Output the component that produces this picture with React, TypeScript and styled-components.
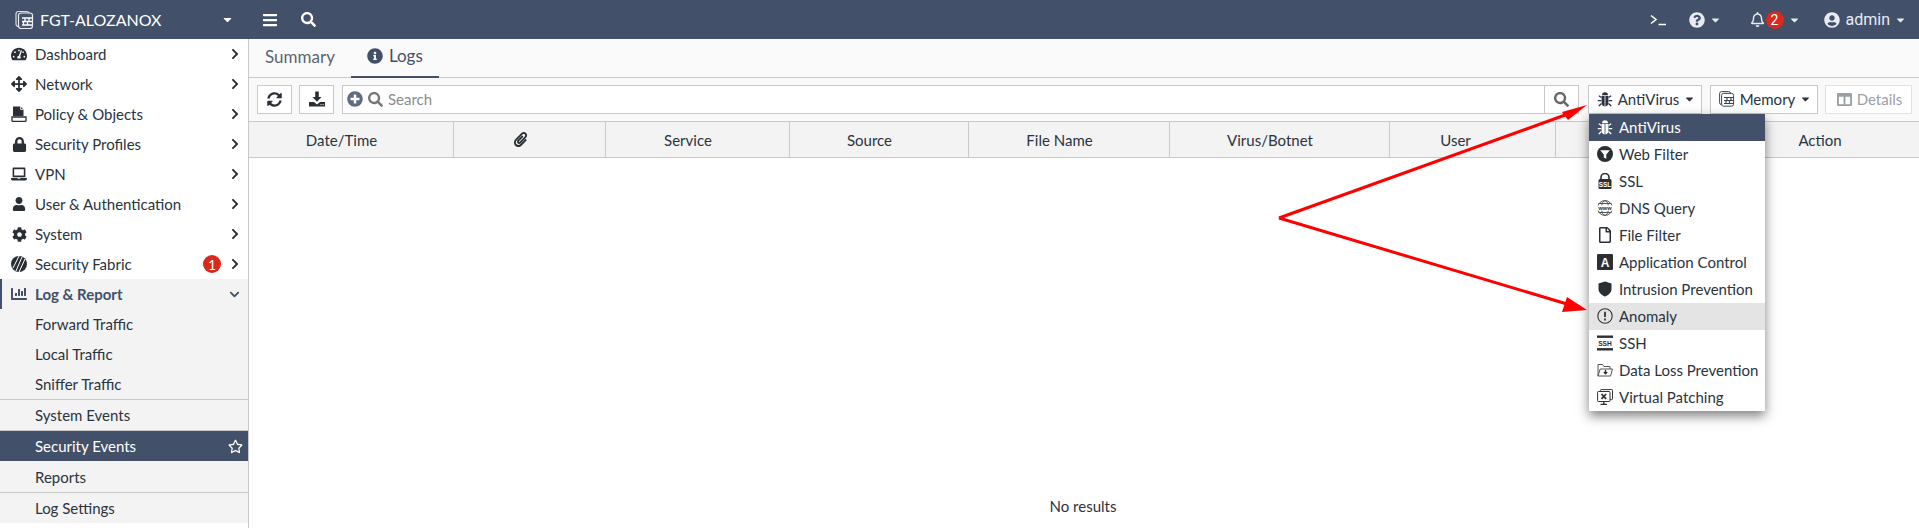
import React from "react"
import styled, { createGlobalStyle } from "styled-components"
import {
  FaTachometerAlt, FaArrowsAlt, FaLock, FaLaptop, FaUser, FaCog, FaChartBar, FaChevronRight,
  FaChevronDown, FaRegStar, FaSyncAlt, FaSearch, FaPlusCircle, FaInfoCircle, FaPaperclip,
  FaBars, FaQuestionCircle, FaRegBell, FaUserCircle, FaCaretDown, FaRegFile, FaColumns,
} from "react-icons/fa"

const navy = "#425069"
const line = "#c9c9c9"
const ink = "#2a3340"

const GlobalStyle = createGlobalStyle`
  html, body { margin: 0; padding: 0; background: #fff; }
  body { font-family: Lato, "Open Sans", sans-serif; font-size: 15px; color: ${ink}; overflow: hidden; }
  * { box-sizing: border-box; }
`

/* hand drawn icons, the ones no package has */
const LogoIcon = () => (
  <svg width="20" height="20" viewBox="0 0 20 20" fill="none" stroke="#fff">
    <rect x="1" y="1.5" width="13" height="15" rx="2.5" strokeWidth="1.2" opacity="0.8" />
    <rect x="3.5" y="3" width="14" height="15.5" rx="2.5" fill={navy} strokeWidth="1.2" opacity="0.9" />
    <path d="M7 8h11M7 11.5h10M7 15h10M10 8v3.5M14 8v3.5M8.5 11.5v3.5M12.5 11.5v3.5" strokeWidth="1.3" />
  </svg>
)
const BugIcon = () => (
  <svg width="16" height="16" viewBox="0 0 16 16" fill="currentColor">
    <path d="M5 4.2a3 3 0 0 1 6 0z" />
    <path d="M4.6 5h3v10.500C5.600 15.200 4.600 13.500 4.600 11.500z" />
    <path d="M8.400 5h3v6.500c0 2-1 3.700-3 4z" />
    <path d="M4.500 6.500 1.800 4.800M4.300 9.700H0.800M4.500 12.500 1.800 15M11.500 6.500l2.700-1.700M11.700 9.700h3.500M11.500 12.500l2.700 2.500" stroke="currentColor" strokeWidth="1.300" fill="none" />
  </svg>
)
const PolicyIcon = () => (
  <svg width="16" height="16" viewBox="0 0 16 16" fill="#2a2f36">
    <path d="M2 0.5h7.5l3 3V10H2z" />
    <path d="M1 11h14v3.5a1 1 0 0 1-1 1H2a1 1 0 0 1-1-1z" fill="#fff" stroke="#2a2f36" strokeWidth="1.3" />
    <path d="M9.5 0.5v3h3" stroke="#fff" strokeWidth="0.8" fill="none" />
  </svg>
)
const FabricIcon = () => (
  <svg width="16" height="16" viewBox="0 0 16 16">
    <circle cx="8" cy="8" r="8" fill="#2a2f36" />
    <path d="M5 15 11 1M8 16l6-13M2 12 8 0" stroke="#fff" strokeWidth="1" />
  </svg>
)
const SaveIcon = () => (
  <svg width="16" height="16" viewBox="0 0 16 16" fill="#2a2f36">
    <path d="M6.2 0.5h3.6V6h2.7L8 10.8 3.5 6h2.7z" />
    <path d="M0 11h5l3 2.4L11 11h5v4.5H0z" />
    <path d="M11.5 13.6h1M13.6 13.6h1" stroke="#fff" strokeWidth="1" />
  </svg>
)
const TerminalIcon = () => (
  <svg width="17" height="12" viewBox="0 0 17 12" fill="none" stroke="#fff" strokeWidth="1.6">
    <path d="M1 1.5 6 5.5 1 9.5M8.5 10.5H16" />
  </svg>
)
const MemoryIcon = () => (
  <svg width="16" height="16" viewBox="0 0 16 16" fill="none" stroke="#3d4654">
    <rect x="0.6" y="0.6" width="11" height="13" rx="2" strokeWidth="1" />
    <rect x="2.6" y="2.4" width="12" height="12.8" rx="2" fill="#fff" strokeWidth="1" />
    <path d="M5 6.5h10M5 9.5h10M5 12.5h10M8 6.5v3M12 6.5v3M7 9.5v3M10.5 9.5v3" strokeWidth="1.2" />
  </svg>
)
const WebFilterIcon = () => (
  <svg width="16" height="16" viewBox="0 0 16 16">
    <circle cx="8" cy="8" r="8" fill="#2a2f36" />
    <path d="M3.2 4.2h9.6L9.3 8.6v4.2L6.8 11.4V8.6z" fill="#fff" />
  </svg>
)
const SslIcon = () => (
  <svg width="16" height="16" viewBox="0 0 16 16">
    <path d="M4 7V4.5a4 4 0 0 1 8 0V7" fill="none" stroke="#2a2f36" strokeWidth="1.6" />
    <rect x="1.5" y="6" width="13" height="10" rx="1.5" fill="#2a2f36" />
    <text x="8" y="13.6" textAnchor="middle" fontSize="6.4" fontWeight="700" fill="#fff" fontFamily="Liberation Sans, sans-serif">SSL</text>
  </svg>
)
const DnsIcon = () => (
  <svg width="16" height="16" viewBox="0 0 16 16">
    <circle cx="8" cy="8" r="7.4" fill="none" stroke="#555" strokeWidth="1" />
    <ellipse cx="8" cy="8" rx="3.5" ry="7.4" fill="none" stroke="#555" strokeWidth="1" />
    <path d="M1.5 3.5h13M1.5 12.5h13" stroke="#555" strokeWidth="1" />
    <rect x="0" y="5.4" width="16" height="5.2" fill="#fff" />
    <text x="8" y="10.2" textAnchor="middle" fontSize="5.6" fontWeight="700" fill="#2a2f36" fontFamily="Liberation Sans, sans-serif">www</text>
  </svg>
)
const AppIcon = () => (
  <svg width="16" height="16" viewBox="0 0 16 16">
    <rect width="16" height="16" rx="1" fill="#2a2f36" />
    <text x="8" y="13" textAnchor="middle" fontSize="12" fontWeight="700" fill="#fff" fontFamily="Liberation Sans, sans-serif">A</text>
  </svg>
)
const ShieldIcon = () => (
  <svg width="16" height="16" viewBox="0 0 16 16">
    <path d="M8 0.5 14.5 2.6V8c0 3.6-3 6.2-6.5 7.6C4.5 14.2 1.5 11.6 1.5 8V2.6z" fill="#2a2f36" />
  </svg>
)
const AnomalyIcon = () => (
  <svg width="16" height="16" viewBox="0 0 16 16" fill="none" stroke="#333">
    <circle cx="8" cy="8" r="7.2" strokeWidth="1.1" />
    <path d="M8 3.8v5.2" strokeWidth="1.8" />
    <path d="M8 10.6v1.8" strokeWidth="1.8" />
  </svg>
)
const SshIcon = () => (
  <svg width="16" height="16" viewBox="0 0 16 16">
    <rect y="0.5" width="16" height="2.4" fill="#2a2f36" />
    <rect y="13.1" width="16" height="2.4" fill="#2a2f36" />
    <text x="8" y="10.8" textAnchor="middle" fontSize="6.6" fontWeight="700" fill="#2a2f36" fontFamily="Liberation Sans, sans-serif">SSH</text>
  </svg>
)
const DlpIcon = () => (
  <svg width="16" height="16" viewBox="0 0 16 16" fill="none" stroke="#555" strokeWidth="1">
    <path d="M1 14V2.5h4.5l1.5 2h6V7" />
    <path d="M1 14h12.6L15.5 7H3.2z" />
    <path d="M8.5 8v3.5M6.8 10l1.7 1.8 1.7-1.8" stroke="#2a2f36" strokeWidth="1.2" />
  </svg>
)
const PatchIcon = () => (
  <svg width="16" height="16" viewBox="0 0 16 16" fill="none" stroke="#333" strokeWidth="1">
    <rect x="3.5" y="0.6" width="12" height="10" rx="0.8" />
    <rect x="0.6" y="2.5" width="12.4" height="10" rx="0.8" fill="#fff" />
    <path d="M3.5 15.4h6.5M6.8 12.5v3" strokeWidth="1.4" />
    <path d="M4.5 5l4.6 4.8M9.1 5 4.5 9.8" strokeWidth="1.8" />
  </svg>
)

const Page = styled.div`
  width: 1919px;
  height: 528px;
  position: relative;
  overflow: hidden;
  display: flex;
  flex-direction: column;
`
const TopBar = styled.header`
  height: 39px;
  flex: none;
  background: ${navy};
  color: #fff;
  display: flex;
  align-items: center;
`
const Brand = styled.div`
  width: 248px;
  display: flex;
  align-items: center;
  padding-left: 15px;
  gap: 5px;
  font-size: 16px;
`
const BrandCaret = styled.span`
  margin-left: auto;
  margin-right: 14px;
  display: flex;
`
const TopLeftTools = styled.div`
  display: flex;
  align-items: center;
  gap: 23px;
  padding-left: 14px;
  svg { display: block; }
`
const TopRight = styled.div`
  margin-left: auto;
  margin-right: 13px;
  display: flex;
  align-items: center;
  font-family: Roboto, sans-serif;
  font-size: 16px;
`
const TopItem = styled.div<{ $gap: number }>`
  display: flex;
  align-items: center;
  gap: 5px;
  margin-left: ${(p) => p.$gap}px;
  color: #e8ecf2;
`
const UserName = styled.span`
  margin-left: 1px;
`
const SmallCaret = styled(FaCaretDown)`
  width: 11px;
  height: 12px;
`
const Body = styled.div`
  flex: 1;
  display: flex;
  min-height: 0;
`
const Sidebar = styled.nav`
  width: 249px;
  flex: none;
  border-right: 1px solid ${line};
  background: #fff;
`
const NavRow = styled.div<{ $section?: boolean }>`
  height: 30px;
  display: flex;
  align-items: center;
  padding-left: 11px;
  color: ${(p) => (p.$section ? navy : ink)};
  font-weight: ${(p) => (p.$section ? 700 : 400)};
  background: ${(p) => (p.$section ? "#f3f3f3" : "transparent")};
  box-shadow: ${(p) => (p.$section ? `inset 2px 0 0 ${navy}` : "none")};
`
const NavIcon = styled.span`
  width: 16px;
  margin-right: 8px;
  display: flex;
  justify-content: center;
  color: #2a2f36;
`
const NavEnd = styled.span`
  margin-left: auto;
  display: flex;
  align-items: center;
  padding-right: 8px;
  gap: 9px;
`
const Badge = styled.span`
  width: 18px;
  height: 18px;
  border-radius: 50%;
  background: #d9291c;
  color: #fff;
  font-size: 14px;
  display: flex;
  align-items: center;
  justify-content: center;
  font-weight: 400;
`
const BellBadge = styled(Badge)`
  margin-left: -4px;
`
const Chevron = styled(FaChevronRight)`
  width: 10px;
  height: 12px;
  color: #2a2f36;
`
const SubList = styled.div`
  background: #f3f3f3;
`
const SubRow = styled.div<{ $active?: boolean; $line?: boolean; $h?: number }>`
  height: ${(p) => p.$h ?? 30}px;
  display: flex;
  align-items: center;
  padding-left: 35px;
  padding-right: 5px;
  justify-content: space-between;
  background: ${(p) => (p.$active ? navy : "transparent")};
  color: ${(p) => (p.$active ? "#fff" : ink)};
  border-top: ${(p) => (p.$line ? `1px solid ${line}` : "none")};
`
const Main = styled.main`
  flex: 1;
  min-width: 0;
  display: flex;
  flex-direction: column;
`
const Tabs = styled.div`
  height: 39px;
  flex: none;
  background: #fafafa;
  border-bottom: 1px solid ${line};
  display: flex;
  padding-left: 16px;
`
const Tab = styled.div<{ $active?: boolean }>`
  height: 39px;
  padding: 0 ${(p) => (p.$active ? "16px" : "0")} 4px;
  margin-left: ${(p) => (p.$active ? "16px" : "0")};
  display: flex;
  align-items: center;
  gap: 6px;
  font-size: 17px;
  color: ${(p) => (p.$active ? navy : "#5a6472")};
  border-bottom: ${(p) => (p.$active ? `2px solid ${navy}` : "none")};
`
const Toolbar = styled.div`
  height: 44px;
  flex: none;
  background: #f9f9f9;
  display: flex;
  align-items: center;
  padding: 0 7px 1px 8px;
  border-bottom: 1px solid ${line};
`
const ToolButton = styled.div<{ $w: number; $dim?: boolean; $ml?: number; $text?: boolean }>`
  width: ${(p) => p.$w}px;
  height: 29px;
  margin-left: ${(p) => p.$ml ?? 0}px;
  padding-left: ${(p) => (p.$text ? 2 : 0)}px;
  background: #fff;
  border: 1px solid ${(p) => (p.$dim ? "#e2e2e2" : line)};
  color: ${(p) => (p.$dim ? "#9aa0a8" : ink)};
  display: flex;
  align-items: center;
  justify-content: center;
  gap: 5px;
`
const SearchBox = styled.div`
  flex: 1;
  height: 29px;
  margin-left: 8px;
  background: #fff;
  border: 1px solid ${line};
  display: flex;
  align-items: center;
  padding-left: 4px;
  gap: 5px;
  color: #8c8c8c;
`
const SearchEnd = styled.span`
  margin-left: auto;
  width: 34px;
  height: 100%;
  border-left: 1px solid ${line};
  display: flex;
  align-items: center;
  justify-content: center;
  color: #666;
`
const HeaderRow = styled.div`
  height: 36px;
  flex: none;
  background: #f3f3f3;
  border-bottom: 1px solid ${line};
  display: flex;
`
const HeaderCell = styled.div<{ $w: number; $pad: number }>`
  width: ${(p) => p.$w}px;
  flex: none;
  padding-right: ${(p) => p.$pad}px;
  border-right: 1px solid ${line};
  display: flex;
  align-items: center;
  justify-content: center;
  &:last-child { border-right: none; flex: 1; }
`
const EmptyArea = styled.div`
  flex: 1;
  display: flex;
  align-items: flex-end;
  justify-content: center;
  padding: 0 2px 13px 0;
`
const Menu = styled.div`
  position: absolute;
  left: 1589px;
  top: 114px;
  width: 176px;
  background: #fff;
  box-shadow: 0 5px 11px rgba(0, 0, 0, 0.5);
  z-index: 2;
`
const MenuItem = styled.div<{ $state?: "active" | "hover" }>`
  height: 27px;
  display: flex;
  align-items: center;
  gap: 6px;
  padding: 0 0 1px 8px;
  background: ${(p) => (p.$state === "active" ? navy : p.$state === "hover" ? "#e4e4e4" : "transparent")};
  color: ${(p) => (p.$state === "active" ? "#fff" : ink)};
`
const MenuIcon = styled.span`
  width: 16px;
  display: flex;
  justify-content: center;
  color: #2a2f36;
  svg { display: block; }
  .light & { color: #fff; }
`
const Arrows = styled.svg`
  position: absolute;
  left: 0;
  top: 0;
  z-index: 3;
  pointer-events: none;
`

const navItems = [
  { label: "Dashboard", icon: <FaTachometerAlt size={16} /> },
  { label: "Network", icon: <FaArrowsAlt size={16} /> },
  { label: "Policy & Objects", icon: <PolicyIcon /> },
  { label: "Security Profiles", icon: <FaLock size={15} /> },
  { label: "VPN", icon: <FaLaptop size={16} /> },
  { label: "User & Authentication", icon: <FaUser size={14} /> },
  { label: "System", icon: <FaCog size={15} /> },
  { label: "Security Fabric", icon: <FabricIcon />, badge: "1" },
]

const columns = [
  { label: "Date/Time", w: 205, pad: 19 },
  { label: "clip", w: 152, pad: 19 },
  { label: "Service", w: 184, pad: 19 },
  { label: "Source", w: 179, pad: 19 },
  { label: "File Name", w: 201, pad: 19 },
  { label: "Virus/Botnet", w: 220, pad: 19 },
  { label: "User", w: 166, pad: 34 },
  { label: "", w: 165, pad: 0 },
  { label: "Action", w: 198, pad: 0 },
]

const menuItems = [
  { label: "AntiVirus", icon: <BugIcon />, state: "active" as const },
  { label: "Web Filter", icon: <WebFilterIcon /> },
  { label: "SSL", icon: <SslIcon /> },
  { label: "DNS Query", icon: <DnsIcon /> },
  { label: "File Filter", icon: <FaRegFile size={16} /> },
  { label: "Application Control", icon: <AppIcon /> },
  { label: "Intrusion Prevention", icon: <ShieldIcon /> },
  { label: "Anomaly", icon: <AnomalyIcon />, state: "hover" as const },
  { label: "SSH", icon: <SshIcon /> },
  { label: "Data Loss Prevention", icon: <DlpIcon /> },
  { label: "Virtual Patching", icon: <PatchIcon /> },
]

export default function App() {
  return (
    <Page>
      <GlobalStyle />
      <TopBar>
        <Brand>
          <LogoIcon />
          FGT-ALOZANOX
          <BrandCaret><FaCaretDown size={13} /></BrandCaret>
        </Brand>
        <TopLeftTools>
          <FaBars size={16} />
          <FaSearch size={15} />
        </TopLeftTools>
        <TopRight>
          <TerminalIcon />
          <TopItem $gap={22}><FaQuestionCircle size={16} /><SmallCaret /></TopItem>
          <TopItem $gap={29}>
            <FaRegBell size={15} />
            <BellBadge>2</BellBadge>
            <SmallCaret />
          </TopItem>
          <TopItem $gap={24}><FaUserCircle size={16} /><UserName>admin</UserName><SmallCaret /></TopItem>
        </TopRight>
      </TopBar>
      <Body>
        <Sidebar>
          {navItems.map((item) => (
            <NavRow key={item.label}>
              <NavIcon>{item.icon}</NavIcon>
              {item.label}
              <NavEnd>
                {item.badge && <Badge>{item.badge}</Badge>}
                <Chevron />
              </NavEnd>
            </NavRow>
          ))}
          <NavRow $section>
            <NavIcon><FaChartBar size={16} color={navy} /></NavIcon>
            Log &amp; Report
            <NavEnd><FaChevronDown size={11} color={navy} /></NavEnd>
          </NavRow>
          <SubList>
            <SubRow>Forward Traffic</SubRow>
            <SubRow>Local Traffic</SubRow>
            <SubRow>Sniffer Traffic</SubRow>
            <SubRow $line $h={31}>System Events</SubRow>
            <SubRow $line $h={31} $active>Security Events<FaRegStar size={15} /></SubRow>
            <SubRow $h={31}>Reports</SubRow>
            <SubRow $line $h={31}>Log Settings</SubRow>
          </SubList>
        </Sidebar>
        <Main>
          <Tabs>
            <Tab>Summary</Tab>
            <Tab $active><FaInfoCircle size={16} color={navy} />Logs</Tab>
          </Tabs>
          <Toolbar>
            <ToolButton $w={35}><FaSyncAlt size={15} color="#2a2f36" /></ToolButton>
            <ToolButton $w={35} $ml={7}><SaveIcon /></ToolButton>
            <SearchBox>
              <FaPlusCircle size={16} color="#5f6b80" />
              <FaSearch size={15} color="#777" />
              Search
              <SearchEnd><FaSearch size={15} /></SearchEnd>
            </SearchBox>
            <ToolButton $w={114} $ml={9} $text><BugIcon />AntiVirus<SmallCaret /></ToolButton>
            <ToolButton $w={108} $ml={8} $text><MemoryIcon />Memory<SmallCaret /></ToolButton>
            <ToolButton $w={87} $ml={7} $dim $text><FaColumns size={15} />Details</ToolButton>
          </Toolbar>
          <HeaderRow>
            {columns.map((col) => (
              <HeaderCell key={col.w + col.label} $w={col.w} $pad={col.pad}>
                {col.label === "clip" ? <FaPaperclip size={15} color="#2a2f36" /> : col.label}
              </HeaderCell>
            ))}
          </HeaderRow>
          <EmptyArea>No results</EmptyArea>
        </Main>
      </Body>
      <Menu>
        {menuItems.map((item) => (
          <MenuItem key={item.label} $state={item.state} className={item.state === "active" ? "light" : undefined}>
            <MenuIcon>{item.icon}</MenuIcon>
            {item.label}
          </MenuItem>
        ))}
      </Menu>
      <Arrows width="1919" height="528" viewBox="0 0 1919 528">
        <path d="M1279 218 1568 114M1279 218 1567 304" stroke="#f00" strokeWidth="3" fill="none" />
        <path d="M1587 105 1562 112 1568 120z" fill="#f00" />
        <path d="M1587 310 1567 297 1562 312z" fill="#f00" />
      </Arrows>
    </Page>
  )
}
